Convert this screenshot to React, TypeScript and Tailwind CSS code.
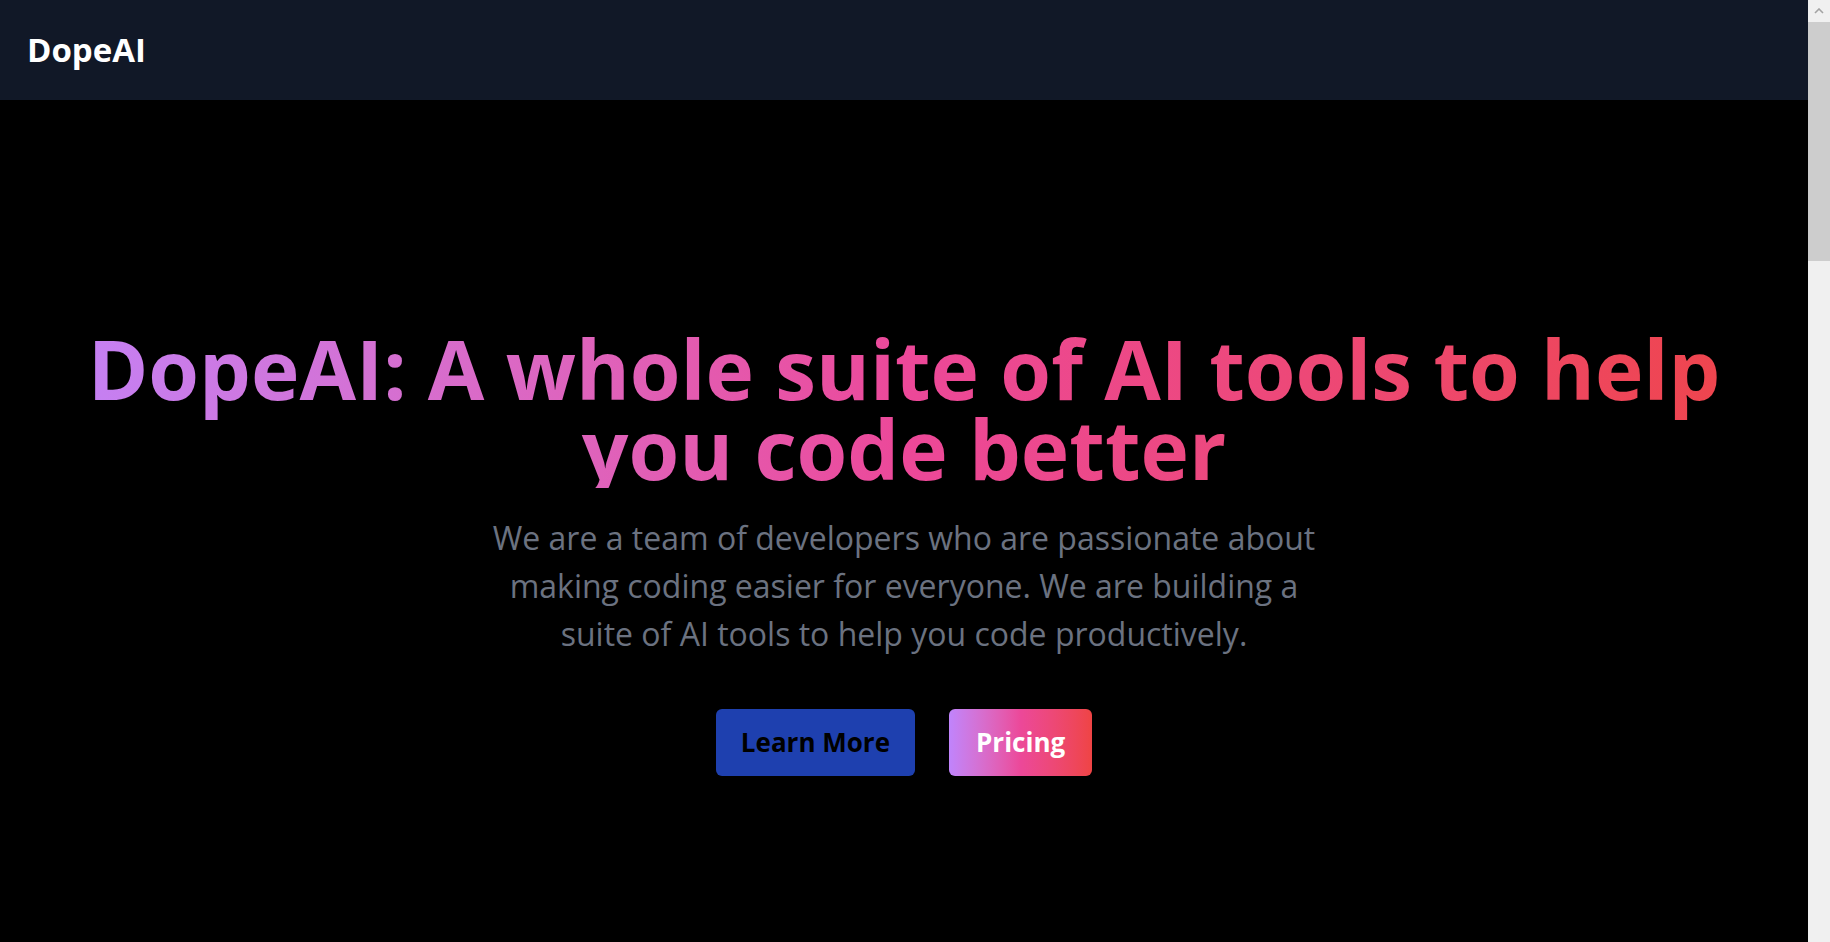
export default function App() {
  return (
    <div className="flex h-screen overflow-hidden bg-black font-['Open_Sans','Noto_Sans',sans-serif]">
      <div className="flex min-w-0 flex-1 flex-col">
        {/* Navbar */}
        <header className="flex h-[100px] shrink-0 items-center bg-[#111827] px-[27px]">
          <span className="text-[33px] font-bold text-white">DopeAI</span>
        </header>

        {/* Hero */}
        <main className="flex flex-1 flex-col items-center pt-[228px]">
          <h1 className="w-full bg-gradient-to-r from-[#c084fc] via-[#ec4899] to-[#ef4444] bg-clip-text px-[60px] text-center text-[82px] leading-[80px] font-bold text-transparent">
            DopeAI: A whole suite of AI tools to help you code better
          </h1>

          <p className="mt-[26px] max-w-[840px] text-center text-[32px] leading-[48px] text-[#6b7280]">
            We are a team of developers who are passionate about making coding easier for everyone. We are building a suite of AI tools to help you code productively.
          </p>

          <div className="mt-[51px] flex gap-[34px]">
            <button
              type="button"
              className="flex h-[67px] items-center rounded-[6px] bg-[#1e40af] px-[25px] text-[26px] font-bold text-black"
            >
              Learn More
            </button>
            <button
              type="button"
              className="flex h-[67px] items-center rounded-[6px] bg-gradient-to-r from-[#c084fc] via-[#ec4899] to-[#ef4444] px-[27px] text-[26px] font-bold text-white"
            >
              Pricing
            </button>
          </div>
        </main>
      </div>

      {/* Window scrollbar */}
      <div className="flex w-[22px] shrink-0 flex-col bg-[#f0f0f0]">
        <div className="flex h-[22px] items-center justify-center">
          <svg width="10" height="6" viewBox="0 0 10 6" aria-hidden="true">
            <path d="M1 5 L5 1 L9 5" fill="none" stroke="#a3a3a3" strokeWidth="1.6" />
          </svg>
        </div>
        <div className="h-[239px] bg-[#cdcdcd]" />
      </div>
    </div>
  );
}
